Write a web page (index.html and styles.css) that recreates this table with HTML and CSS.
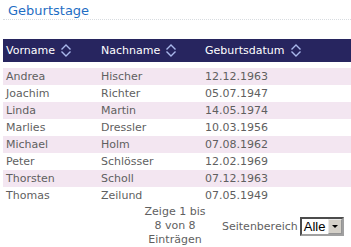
FILE: index.html
```html
<!DOCTYPE html>
<html>
<head>
<meta charset="utf-8">
<link rel="stylesheet" href="styles.css">
</head>
<body>
<div class="page">
  <div class="title">Geburtstage</div>
  <div class="table">
    <div class="head">
      <div class="th c1">Vorname <svg class="sort" viewBox="0 0 12 13" width="12" height="13"><path d="M1.5 5.5 L6 1 L10.5 5.5 M1.5 7.5 L6 12 L10.5 7.5"/></svg></div>
      <div class="th c2">Nachname <svg class="sort" viewBox="0 0 12 13" width="12" height="13"><path d="M1.5 5.5 L6 1 L10.5 5.5 M1.5 7.5 L6 12 L10.5 7.5"/></svg></div>
      <div class="th c3">Geburtsdatum <svg class="sort" viewBox="0 0 12 13" width="12" height="13"><path d="M1.5 5.5 L6 1 L10.5 5.5 M1.5 7.5 L6 12 L10.5 7.5"/></svg></div>
    </div>
    <div class="rows">
      <div class="row odd"><div class="c1">Andrea</div><div class="c2">Hischer</div><div class="c3">12.12.1963</div></div>
      <div class="row"><div class="c1">Joachim</div><div class="c2">Richter</div><div class="c3">05.07.1947</div></div>
      <div class="row odd"><div class="c1">Linda</div><div class="c2">Martin</div><div class="c3">14.05.1974</div></div>
      <div class="row"><div class="c1">Marlies</div><div class="c2">Dressler</div><div class="c3">10.03.1956</div></div>
      <div class="row odd"><div class="c1">Michael</div><div class="c2">Holm</div><div class="c3">07.08.1962</div></div>
      <div class="row"><div class="c1">Peter</div><div class="c2">Schlösser</div><div class="c3">12.02.1969</div></div>
      <div class="row odd"><div class="c1">Thorsten</div><div class="c2">Scholl</div><div class="c3">07.12.1963</div></div>
      <div class="row"><div class="c1">Thomas</div><div class="c2">Zeilund</div><div class="c3">07.05.1949</div></div>
    </div>
  </div>
  <div class="footer">
    <div class="info">Zeige 1 bis<br>8 von 8<br>Einträgen</div>
    <div class="length">
      <span class="label">Seitenbereich</span>
      <span class="select"><span class="value">Alle</span><span class="btn"><span class="arrow"></span></span></span>
    </div>
  </div>
</div>
</body>
</html>
```

FILE: styles.css
```css
html, body {
  margin: 0;
  padding: 0;
  background: #ffffff;
}
body {
  font-family: "DejaVu Sans", Verdana, sans-serif;
  font-size: 11px;
  color: #5f5f5f;
}
.page {
  margin-left: 3px;
  width: 360px;
}
.title {
  padding: 4px 0 1px 5px;
  font-size: 13px;
  line-height: 14px;
  color: #1f6ec4;
  border-bottom: 1px dotted #d8dce0;
}
.table {
  margin-top: 19px;
}
.head {
  display: flex;
  height: 23px;
  align-items: center;
  background: #27255f;
  color: #ffffff;
}
.th {
  display: flex;
  align-items: center;
  gap: 5px;
}
.sort {
  fill: none;
  stroke: #aab8ec;
  stroke-width: 1.4;
}
.c1 { width: 95px; padding-left: 3px; box-sizing: border-box; }
.c2 { width: 104px; padding-left: 3px; box-sizing: border-box; }
.c3 { flex: 1; padding-left: 3px; }
.rows {
  margin-top: 6px;
}
.row {
  display: flex;
  height: 17px;
  align-items: center;
}
.row.odd {
  background: #f3e6f1;
}
.footer {
  display: flex;
  align-items: center;
  padding-top: 1px;
}
.info {
  width: 80px;
  margin-left: 132px;
  text-align: center;
  line-height: 14px;
}
.length {
  display: flex;
  align-items: center;
  margin-left: 7px;
}
.label {
  margin-right: 2px;
}
.select {
  display: flex;
  align-items: stretch;
  height: 15px;
  border: 2px inset #a0a0a0;
  background: #ffffff;
  font-family: "Liberation Sans", Arial, sans-serif;
  font-size: 13px;
  line-height: 15px;
  color: #000000;
}
.value {
  padding: 0 3px 0 2px;
}
.btn {
  width: 14px;
  background: #d4d0c8;
  border: 1px outset #e8e8e8;
  box-sizing: border-box;
  display: flex;
  align-items: center;
  justify-content: center;
}
.arrow {
  width: 0;
  height: 0;
  border-left: 3px solid transparent;
  border-right: 3px solid transparent;
  border-top: 3px solid #000000;
}
```
